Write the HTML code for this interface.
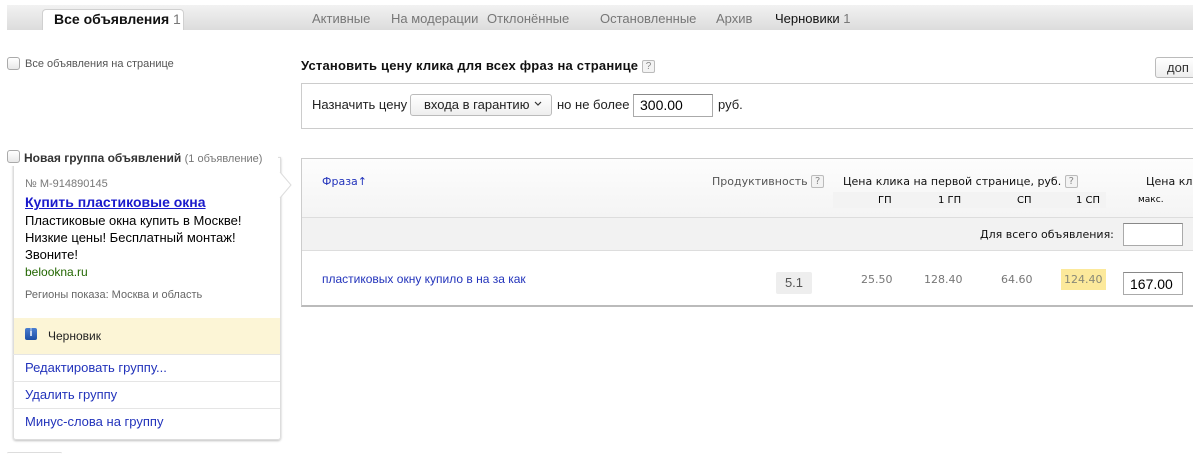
<!DOCTYPE html>
<html><head><meta charset="utf-8"><style>
*{margin:0;padding:0;box-sizing:border-box}
body{width:1193px;height:455px;background:#fff;font-family:"Liberation Sans",Arial,sans-serif;position:relative;overflow:hidden;color:#000}
.a{position:absolute;white-space:nowrap}
.tab{font-size:13px;color:#777;top:11px}
.cb{position:absolute;width:13px;height:13px;border:1px solid #aaa;border-radius:3px;background:linear-gradient(#fff,#e8e8e8)}
.q{display:inline-block;width:13px;height:13px;border:1px solid #bbb;border-radius:2px;font-size:10px;line-height:11px;text-align:center;color:#888;background:#f3f3f3;vertical-align:1px}
.v{font-family:"DejaVu Sans",Verdana,sans-serif;font-size:11px}
.inp{position:absolute;border:1px solid #aaa;border-top-color:#888;background:#fff}
.lnk{position:absolute;left:13px;width:267px;height:27px;border-top:1px solid #e5e5e5;padding-left:12px;line-height:26px;font-size:13px;color:#2233bb}
</style></head><body>
<div class="a" style="left:7px;top:5px;width:1186px;height:25px;background:linear-gradient(#f2f2f2,#dcdcdc)"></div>
<div class="a" style="left:42px;top:9px;width:142px;height:21px;background:#fff;border:1px solid #d0d0d0;border-bottom:none;border-radius:4px 4px 0 0"></div>
<div class="a" style="left:54px;top:11px;font-size:14px;font-weight:bold;color:#111">Все объявления <span style="font-weight:normal;color:#777">1</span></div>
<div class="a tab" style="left:312px">Активные</div>
<div class="a tab" style="left:391px">На модерации</div>
<div class="a tab" style="left:487px">Отклонённые</div>
<div class="a tab" style="left:600px">Остановленные</div>
<div class="a tab" style="left:716px">Архив</div>
<div class="a tab" style="left:775px;color:#111">Черновики <span style="color:#777">1</span></div>

<div class="cb" style="left:7px;top:57px"></div>
<div class="a" style="left:25px;top:58px;font-size:11px;color:#555">Все объявления на странице</div>

<div class="a" style="left:301px;top:58px;font-size:13px;font-weight:bold;color:#111;letter-spacing:0.2px">Установить цену клика для всех фраз на странице <span class="q" style="font-weight:normal;letter-spacing:0">?</span></div>
<div class="a" style="left:1155px;top:57px;width:50px;height:21px;border:1px solid #bbb;border-radius:3px;background:linear-gradient(#fff,#eee);font-size:13px;padding:2px 0 0 11px;color:#333">доп</div>

<div class="a" style="left:301px;top:83px;width:900px;height:46px;border:1px solid #ccc"></div>
<div class="a" style="left:312px;top:97px;font-size:13px;color:#222">Назначить цену</div>
<div class="a" style="left:410px;top:94px;width:142px;height:22px;border:1px solid #bbb;border-radius:3px;background:linear-gradient(#fff,#eee);font-size:13px;padding:2px 0 0 13px;color:#222">входа в гарантию</div>
<svg class="a" style="left:534px;top:101px" width="8" height="6"><path d="M1 1 L4 4 L7 1" fill="none" stroke="#333" stroke-width="1.2"/></svg>
<div class="a" style="left:557px;top:97px;font-size:13px;color:#222">но не более</div>
<div class="inp" style="left:633px;top:94px;width:80px;height:23px;font-size:14px;padding:2px 0 0 6px">300.00</div>
<div class="a" style="left:718px;top:97px;font-size:13px;color:#222">руб.</div>

<div class="a" style="left:301px;top:158px;width:900px;height:149px;border:1px solid #ccc;border-bottom:2px solid #bbb;border-right:none"></div>
<div class="a" style="left:302px;top:159px;width:891px;height:59px;background:linear-gradient(#fdfdfd,#f4f4f4);border-bottom:1px solid #ddd"></div>
<div class="a" style="left:833px;top:192px;width:273px;height:16px;background:#f3f3f3"></div>
<div class="a v" style="left:322px;top:175px;color:#2233bb">Фраза&#8593;</div>
<div class="a v" style="left:712px;top:175px;color:#555">Продуктивность <span class="q">?</span></div>
<div class="a v" style="left:843px;top:175px;color:#111">Цена клика на первой странице, руб. <span class="q">?</span></div>
<div class="a v" style="left:1146px;top:175px;color:#111">Цена кл</div>
<div class="a v" style="left:878px;top:195px;font-size:10px">ГП</div>
<div class="a v" style="left:938px;top:195px;font-size:10px">1 ГП</div>
<div class="a v" style="left:1017px;top:195px;font-size:10px">СП</div>
<div class="a v" style="left:1076px;top:195px;font-size:10px">1 СП</div>
<div class="a v" style="left:1138px;top:195px;font-size:9px">макс.</div>
<div class="a" style="left:302px;top:218px;width:891px;height:33px;background:#f2f2f2;border-bottom:1px solid #ddd"></div>
<div class="a v" style="left:980px;top:228px;color:#111">Для всего объявления:</div>
<div class="inp" style="left:1123px;top:223px;width:60px;height:23px"></div>
<div class="a" style="left:322px;top:272px;font-size:12px;color:#2233bb">пластиковых окну купило в на за как</div>
<div class="a" style="left:776px;top:272px;width:36px;height:22px;background:#eee;border-radius:2px;font-size:13px;color:#555;text-align:center;padding-top:3px">5.1</div>
<div class="a v" style="left:861px;top:273px;color:#777">25.50</div>
<div class="a v" style="left:924px;top:273px;color:#777">128.40</div>
<div class="a v" style="left:1001px;top:273px;color:#777">64.60</div>
<div class="a v" style="left:1061px;top:269px;width:45px;height:21px;background:#fce99b;color:#887;padding:4px 0 0 3px">124.40</div>
<div class="inp" style="left:1123px;top:272px;width:60px;height:23px;font-size:14px;padding:3px 0 0 6px">167.00</div>

<div class="a" style="left:13px;top:157px;width:268px;height:283px;border:1px solid #ddd;border-radius:0 0 3px 3px;box-shadow:0 1px 2px rgba(0,0,0,.25)"></div>
<svg class="a" style="left:279px;top:172px" width="14" height="30"><path d="M1 0 L12 13 L1 26" fill="#fff" stroke="#ddd"/></svg>
<div class="a" style="left:3px;top:149px;width:275px;height:17px;background:#fff"></div>
<div class="cb" style="left:7px;top:150px"></div>
<div class="a" style="left:24px;top:151px;font-size:12px;font-weight:bold;color:#333">Новая группа объявлений <span style="font-weight:normal;font-size:11px;color:#777">(1 объявление)</span></div>
<div class="a" style="left:25px;top:178px;font-size:11px;color:#777">№ M-914890145</div>
<div class="a" style="left:25px;top:194px;font-size:14px;font-weight:bold;color:#1a1acc;text-decoration:underline">Купить пластиковые окна</div>
<div class="a" style="left:25px;top:212px;font-size:13px;line-height:17px;color:#000">Пластиковые окна купить в Москве!<br>Низкие цены! Бесплатный монтаж!<br>Звоните!</div>
<div class="a" style="left:25px;top:265px;font-size:12px;color:#226600">belookna.ru</div>
<div class="a" style="left:25px;top:289px;font-size:11px;color:#666">Регионы показа: Москва и область</div>
<div class="a" style="left:14px;top:318px;width:266px;height:36px;background:#fcf5d6"></div>
<div class="a" style="left:25px;top:328px;width:12px;height:12px;background:linear-gradient(#4a7ed0,#1d4fa5);border-radius:2px;color:#fff;font-size:10px;font-weight:bold;text-align:center;line-height:12px">i</div>
<div class="a" style="left:48px;top:329px;font-size:12px;color:#222">Черновик</div>
<div class="lnk" style="top:354px">Редактировать группу...</div>
<div class="lnk" style="top:381px">Удалить группу</div>
<div class="lnk" style="top:408px">Минус-слова на группу</div>
<div class="a" style="left:7px;top:452px;width:55px;height:3px;border-top:1px solid #ddd;border-radius:3px"></div>
</body></html>
